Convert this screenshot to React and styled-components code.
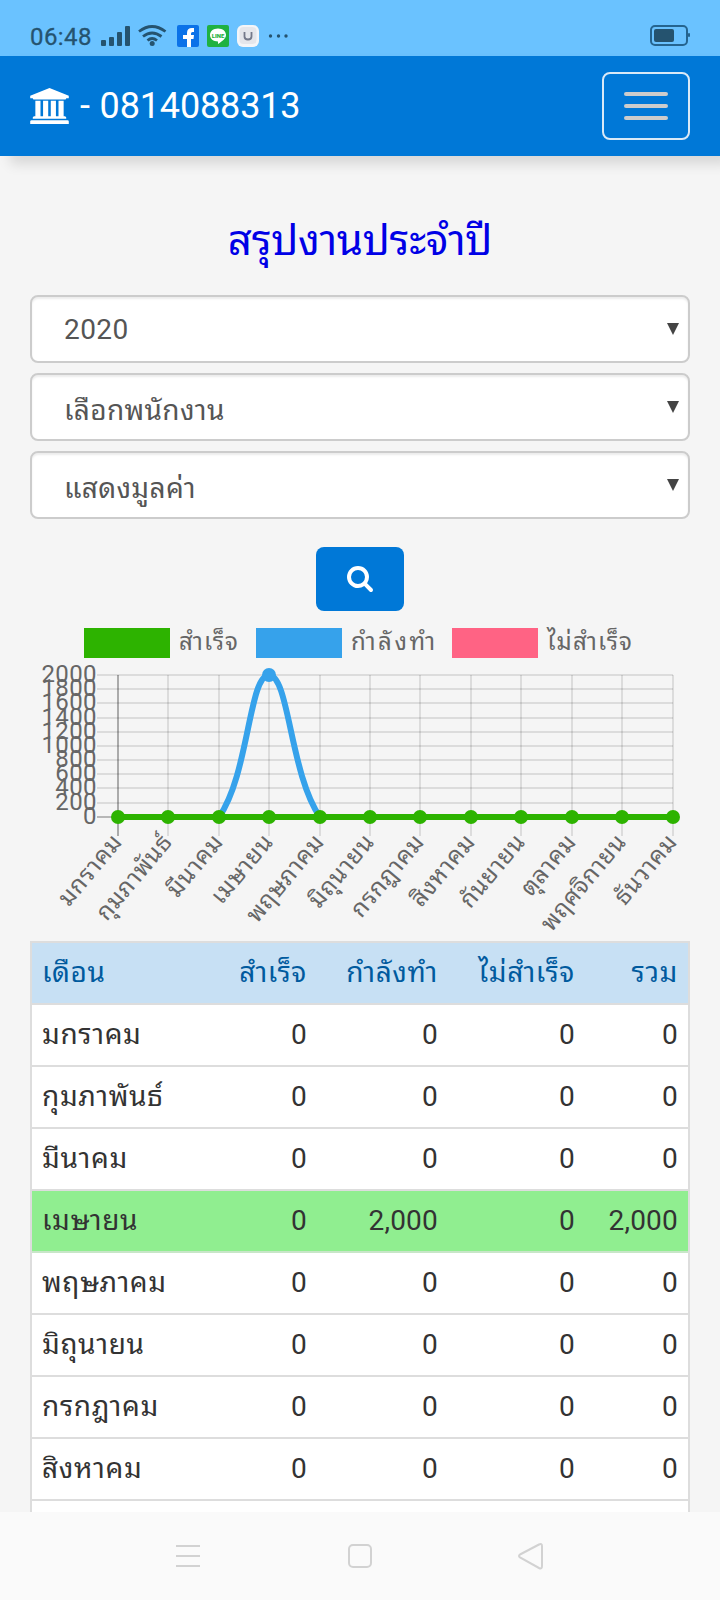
import React from 'react';
import styled, { createGlobalStyle } from 'styled-components';

const GlobalStyle = createGlobalStyle`
  * { box-sizing: border-box; }
  body {
    margin: 0;
    background: #f5f5f5;
    font-family: Roboto, "Noto Sans Thai Looped", "Droid Sans Thai", Loma, "Noto Sans Thai", "Noto Sans", sans-serif;
  }
`;

const Screen = styled.div`
  width: 720px;
  height: 1600px;
  display: flex;
  flex-direction: column;
  overflow: hidden;
  background: #f5f5f5;
`;

const StatusBar = styled.div`
  flex: none;
  height: 56px;
  padding: 16px 30px 0;
  display: flex;
  align-items: flex-start;
  background: #6ac2ff;
  color: #25536f;
`;

const Clock = styled.span`
  width: 71px;
  font-size: 24px;
  line-height: 42px;
  letter-spacing: 0.4px;
  -webkit-text-stroke: 0.3px #25536f;
`;

const StatusIcons = styled.svg`
  display: block;
`;

const Spacer = styled.div`
  flex: 1;
`;

const Navbar = styled.header`
  flex: none;
  position: relative;
  height: 100px;
  padding: 0 30px;
  display: flex;
  align-items: center;
  justify-content: space-between;
  background: #0078d7;
  box-shadow: 10px 8px 12px rgba(0, 0, 0, 0.12);
`;

const Brand = styled.div`
  display: flex;
  align-items: center;
  gap: 11px;
  color: #fff;
  font-size: 36px;
  line-height: 44px;
  letter-spacing: -0.15px;
  word-spacing: 1px;
`;

const Toggle = styled.button`
  width: 88px;
  height: 68px;
  padding: 0;
  display: flex;
  flex-direction: column;
  align-items: center;
  justify-content: center;
  gap: 8px;
  background: transparent;
  border: 2px solid #d9e9f7;
  border-radius: 8px;
`;

const ToggleBar = styled.span`
  width: 44px;
  height: 4px;
  border-radius: 2px;
  background: #ccc;
`;

const Content = styled.main`
  flex: 1;
  min-height: 0;
  overflow: hidden;
  padding: 0 30px;
  display: flex;
  flex-direction: column;
`;

const Title = styled.h1`
  flex: none;
  margin: 57px 0 0;
  height: 82px;
  text-align: center;
  font-size: 42px;
  font-weight: 400;
  line-height: 55px;
  letter-spacing: -0.3px;
  color: #0000e6;
`;

const Filters = styled.div`
  flex: none;
  display: flex;
  flex-direction: column;
  gap: 10px;
`;

const Select = styled.div`
  height: 68px;
  padding: 0 9px 0 32px;
  display: flex;
  align-items: flex-start;
  justify-content: space-between;
  background: #fff;
  border: 2px solid #ccc;
  border-radius: 8px;
  box-shadow: inset 0 2px 2px rgba(0, 0, 0, 0.075);
  color: #555;
  font-size: 28px;
`;

const SelectText = styled.span`
  line-height: ${props => (props.$thai ? 72 : 66)}px;
  letter-spacing: ${props => (props.$thai ? 0.35 : 0.4)}px;
`;

const Arrow = styled.svg`
  margin-top: 26px;
`;

const SearchButton = styled.button`
  flex: none;
  width: 88px;
  height: 64px;
  margin: 28px auto 0;
  padding: 0;
  display: flex;
  align-items: center;
  justify-content: center;
  background: #0078d7;
  border: 0;
  border-radius: 8px;
`;

const Chart = styled.svg`
  flex: none;
  display: block;
  width: 660px;
  height: 330px;
  overflow: visible;
  font-size: 24px;
`;

const Table = styled.div`
  flex: none;
  border: 2px solid #ddd;
  border-bottom: 0;
  background: #fff;
`;

const Row = styled.div`
  display: grid;
  grid-template-columns: 1fr 90px 131px 137px 103px;
  height: 62px;
  padding: 0 10px;
  border-bottom: 2px solid ${props => (props.$active ? '#c8e6c8' : '#ddd')};
  font-size: 28px;
  line-height: 59px;
  color: ${props => (props.$head ? '#005a9e' : '#333')};
  background: ${props => (props.$head ? '#c7e0f4' : props.$active ? '#90ee90' : '#fff')};
`;

const Cell = styled.span`
  white-space: nowrap;
  text-align: ${props => (props.$right ? 'right' : 'left')};
  letter-spacing: ${props => (props.$thai ? 0.65 : 0.2)}px;
`;

const SystemNav = styled.nav`
  flex: none;
  height: 88px;
  display: flex;
  justify-content: center;
  align-items: center;
  background: #fafafa;
`;

const months = [
  'มกราคม', 'กุมภาพันธ์', 'มีนาคม', 'เมษายน', 'พฤษภาคม', 'มิถุนายน',
  'กรกฎาคม', 'สิงหาคม', 'กันยายน', 'ตุลาคม', 'พฤศจิกายน', 'ธันวาคม',
];

const legend = [
  { label: 'สำเร็จ', color: '#2db300', x: 84, width: 59 },
  { label: 'กำลังทำ', color: '#36a2eb', x: 256, width: 84 },
  { label: 'ไม่สำเร็จ', color: '#ff6384', x: 452, width: 85 },
];

const xs = [118, 168, 219, 269, 320, 370, 420, 471, 521, 572, 622, 673];
const ys = [675, 689, 703, 718, 732, 746, 760, 774, 788, 803, 817];

const SummaryChart = () => (
  <Chart viewBox="30 611 660 330">
    {legend.map(item => (
      <g key={item.label}>
        <rect x={item.x} y="628" width="86" height="30" fill={item.color} />
        <text x={item.x + 95} y="650" textLength={item.width} fill="#666">{item.label}</text>
      </g>
    ))}
    {ys.map((y, i) => (
      <g key={y}>
        <path d={`M97 ${y}H673`} stroke={i === 10 ? 'rgba(0,0,0,.25)' : 'rgba(0,0,0,.1)'} strokeWidth="2" />
        <text x="97" y={y + 7} textAnchor="end" letterSpacing="0.4" fill="#666">{2000 - i * 200}</text>
      </g>
    ))}
    {xs.map((x, i) => (
      <g key={x}>
        <path d={`M${x} 675V836`} stroke={i === 0 ? 'rgba(0,0,0,.3)' : 'rgba(0,0,0,.1)'} strokeWidth="2" />
        <text transform={`translate(${x} 838) rotate(-50)`} y="7" textAnchor="end" letterSpacing="0.5" fill="#666">{months[i]}</text>
      </g>
    ))}
    <path d="M219 817C249 774 249 675 269 675S290 774 320 817" fill="none" stroke="#36a2eb" strokeWidth="6" />
    <circle cx="269" cy="675" r="7" fill="#36a2eb" />
    <path d="M118 817H673" stroke="#2db300" strokeWidth="6" />
    {xs.map(x => <circle key={x} cx={x} cy="817" r="7" fill="#2db300" />)}
  </Chart>
);

const App = () => {
  const filters = ['2020', 'เลือกพนักงาน', 'แสดงมูลค่า'];

  return (
    <Screen>
      <GlobalStyle />
      <StatusBar>
        <Clock>06:48</Clock>
        <StatusIcons width="190" height="40" viewBox="101 16 190 40">
          <g fill="#25536f">
            <rect x="101" y="40" width="5" height="6" rx="1" />
            <rect x="109" y="37" width="5" height="9" rx="1" />
            <rect x="117" y="32" width="5" height="14" rx="1" />
            <rect x="125" y="26" width="5" height="20" rx="1" />
            <circle cx="152.200" cy="43.500" r="2.500" />
            <circle cx="270.500" cy="36" r="1.700" />
            <circle cx="278.500" cy="36" r="1.700" />
            <circle cx="286" cy="36" r="1.700" />
          </g>
          <path d="M139 31.500q13-10 26.500 0M143 36.500q9-7 18.500 0M147.500 40.500q4.500-4 9.500 0" fill="none" stroke="#25536f" strokeWidth="2.800" />
          <rect x="177" y="25" width="22" height="22" rx="2" fill="#0b72e8" />
          <path d="M187 47v-8h-4v-4h4v-2q0-5 5-5h2v4h-1.500q-1.500 0-1.500 1.500V35h3l-.5 4H191v8z" fill="#fff" />
          <rect x="207" y="25" width="22" height="22" rx="2" fill="#1fb141" />
          <path d="M218 28.500c4.700 0 8 2.800 8 6.500 0 3.400-3.500 6-8 9v-2.500c-4.700 0-8-2.800-8-6.500s3.300-6.500 8-6.500z" fill="#fff" />
          <text x="218" y="37.500" fontSize="6" fontWeight="900" textAnchor="middle" fill="#1fb141">LINE</text>
          <rect x="237" y="25" width="22" height="22" rx="6" fill="#f3f5f8" />
          <rect x="239.500" y="27" width="17" height="17" rx="4" fill="#e4e6eb" />
          <path d="M244.500 32v4.500q0 3 3.500 3t3.500-3V32" fill="none" stroke="#74798a" strokeWidth="1.800" />
        </StatusIcons>
        <Spacer />
        <StatusIcons width="40" height="40" viewBox="650 16 40 40">
          <rect x="651" y="26" width="36" height="19" rx="4" fill="none" stroke="#25648f" strokeWidth="2" />
          <rect x="654" y="29" width="20" height="13" rx="2" fill="#25536f" />
          <rect x="688" y="33" width="2" height="4" rx="1" fill="#25648f" />
        </StatusIcons>
      </StatusBar>

      <Navbar>
        <Brand>
          <svg width="39" height="36" viewBox="0 0 1920 1792" fill="#fff">
            <path d="M960 0l960 384v128h-128q0 26-20.500 45t-48.500 19h-1526q-28 0-48.500-19t-20.500-45h-128v-128zm-704 640h256v768h128v-768h256v768h128v-768h256v768h128v-768h256v768h59q28 0 48.500 19t20.500 45v64h-1664v-64q0-26 20.500-45t48.500-19h59v-768zm1595 960q28 0 48.500 19t20.500 45v128h-1920v-128q0-26 20.500-45t48.500-19h1782z" />
          </svg>
          <span>- 0814088313</span>
        </Brand>
        <Toggle>
          <ToggleBar />
          <ToggleBar />
          <ToggleBar />
        </Toggle>
      </Navbar>

      <Content>
        <Title>สรุปงานประจำปี</Title>
        <Filters>
          {filters.map((label, i) => (
            <Select key={label}>
              <SelectText $thai={i > 0}>{label}</SelectText>
              <Arrow width="12" height="12" viewBox="0 0 12 12"><path d="M0 0h12L6 12z" fill="#444" /></Arrow>
            </Select>
          ))}
        </Filters>
        <SearchButton>
          <svg width="26" height="26" viewBox="0 128 1664 1664" fill="#fff">
            <path d="M1152 832q0-185-131.500-316.500t-316.500-131.500-316.500 131.500-131.500 316.500 131.500 316.500 316.500 131.500 316.500-131.500 131.500-316.500zm512 832q0 52-38 90t-90 38q-54 0-90-38l-343-342q-179 124-399 124-143 0-273.500-55.500t-225-150-150-225-55.500-273.500 55.500-273.500 150-225 225-150 273.500-55.500 273.500 55.500 225 150 150 225 55.500 273.500q0 220-124 399l343 343q37 37 37 90z" />
          </svg>
        </SearchButton>
        <SummaryChart />
        <Table>
          <Row $head>
            <Cell $thai>เดือน</Cell>
            <Cell $thai $right>สำเร็จ</Cell>
            <Cell $thai $right>กำลังทำ</Cell>
            <Cell $thai $right>ไม่สำเร็จ</Cell>
            <Cell $thai $right>รวม</Cell>
          </Row>
          {months.slice(0, 8).map((month, i) => {
            const doing = i === 3 ? '2,000' : '0';
            return (
              <Row key={month} $active={i === 3}>
                <Cell $thai>{month}</Cell>
                <Cell $right>0</Cell>
                <Cell $right>{doing}</Cell>
                <Cell $right>0</Cell>
                <Cell $right>{doing}</Cell>
              </Row>
            );
          })}
          <Row />
        </Table>
      </Content>

      <SystemNav>
        <svg width="370" height="30" viewBox="175 1541 370 30" fill="none" stroke="#d2d2d2" strokeWidth="2">
          <path d="M176 1546h24M176 1556h24M176 1566h24" />
          <rect x="349" y="1545" width="22" height="22" rx="4" />
          <path d="M520 1554.500L539 1544.500Q542 1543 542 1546V1566Q542 1569.500 539 1568L520 1557.500Q518 1556 520 1554.500z" />
        </svg>
      </SystemNav>
    </Screen>
  );
};

export default App;
